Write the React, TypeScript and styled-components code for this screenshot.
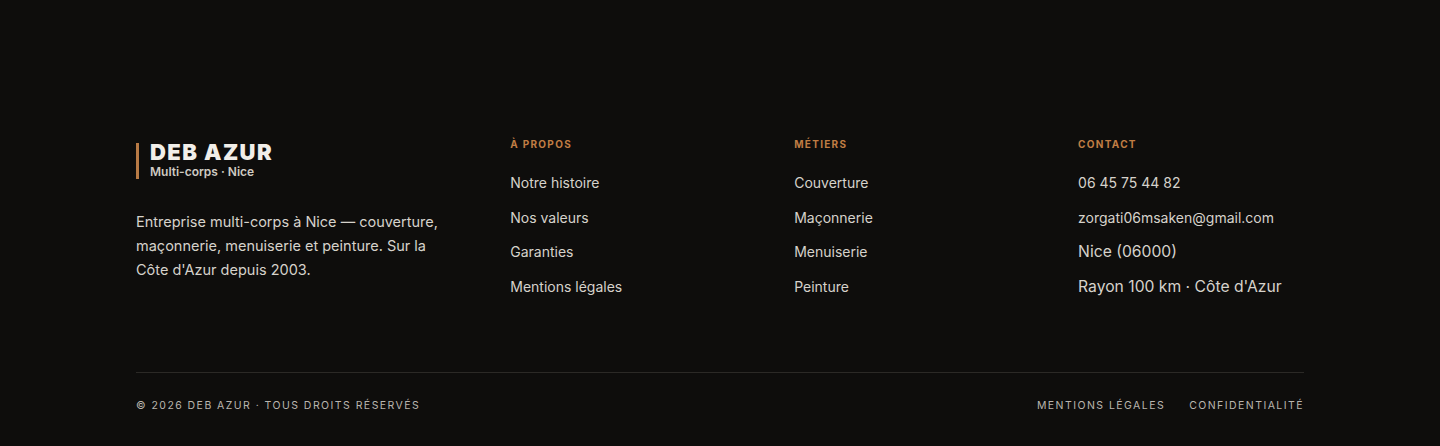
import React from 'react';
import styled, { createGlobalStyle } from 'styled-components';

const GlobalStyle = createGlobalStyle`
  * { box-sizing: border-box; }
  html, body {
    margin: 0;
    padding: 0;
    background: #0e0d0c;
  }
  body {
    font-family: Inter, "Open Sans", "Liberation Sans", sans-serif;
    -webkit-font-smoothing: antialiased;
  }
`;

const Footer = styled.footer`
  background: #0e0d0c;
  color: #d6d2cb;
  padding: 136px 136px 0;
  min-height: 446px;
`;

const Columns = styled.div`
  display: grid;
  grid-template-columns: 1.4fr 1fr 1fr 1fr;
  column-gap: 58px;
  padding-bottom: 60px;
`;

const Brand = styled.div`
  display: flex;
  flex-direction: column;
`;

const Logo = styled.div`
  border-left: 3px solid #b87a45;
  padding-left: 11px;
  margin-top: 7px;
  display: flex;
  flex-direction: column;
`;

const LogoName = styled.span`
  font-size: 22px;
  font-weight: 900;
  line-height: 22px;
  color: #f1eee9;
  letter-spacing: 1.4px;
  margin-top: -2px;
`;

const LogoTag = styled.span`
  font-size: 12px;
  font-weight: 600;
  line-height: 14px;
  color: #cfcac2;
  margin-top: 2px;
`;

const About = styled.p`
  margin: 31px 0 0;
  font-size: 14.5px;
  line-height: 24px;
  color: #d6d2cb;
  max-width: 320px;
`;

const Column = styled.div`
  display: flex;
  flex-direction: column;
`;

const Heading = styled.h4`
  margin: 0 0 20px;
  padding-top: 1px;
  font-size: 10px;
  font-weight: 700;
  letter-spacing: 1.3px;
  text-transform: uppercase;
  color: #c07d44;
  line-height: 14px;
`;

const List = styled.ul`
  list-style: none;
  margin: 0;
  padding: 2px 0 0;
  display: flex;
  flex-direction: column;
`;

const Item = styled.li<{ $large?: boolean }>`
  font-size: ${p => (p.$large ? '15.7px' : '14px')};
  line-height: 20px;
  height: 34.7px;
  color: #d6d2cb;
  white-space: nowrap;
`;

const Bottom = styled.div`
  border-top: 1px solid #2b2926;
  padding-top: 26px;
  display: flex;
  justify-content: space-between;
  align-items: center;
`;

const Small = styled.span`
  font-size: 10.5px;
  letter-spacing: 1.45px;
  text-transform: uppercase;
  color: #b9b5ae;
`;

const BottomLinks = styled.div`
  display: flex;
  gap: 24px;
`;

const aboutLinks = ['Notre histoire', 'Nos valeurs', 'Garanties', 'Mentions légales'];
const trades = ['Couverture', 'Maçonnerie', 'Menuiserie', 'Peinture'];

export default function App() {
  return (
    <>
      <GlobalStyle />
      <Footer>
        <Columns>
          <Brand>
            <Logo>
              <LogoName>DEB AZUR</LogoName>
              <LogoTag>Multi-corps · Nice</LogoTag>
            </Logo>
            <About>
              Entreprise multi-corps à Nice — couverture, maçonnerie, menuiserie et peinture. Sur la
              Côte d'Azur depuis 2003.
            </About>
          </Brand>
          <Column>
            <Heading>À propos</Heading>
            <List>
              {aboutLinks.map(l => (
                <Item key={l}>{l}</Item>
              ))}
            </List>
          </Column>
          <Column>
            <Heading>Métiers</Heading>
            <List>
              {trades.map(l => (
                <Item key={l}>{l}</Item>
              ))}
            </List>
          </Column>
          <Column>
            <Heading>Contact</Heading>
            <List>
              <Item>06 45 75 44 82</Item>
              <Item>zorgati06msaken@gmail.com</Item>
              <Item $large>Nice (06000)</Item>
              <Item $large>Rayon 100 km · Côte d'Azur</Item>
            </List>
          </Column>
        </Columns>
        <Bottom>
          <Small>© 2026 Deb Azur · Tous droits réservés</Small>
          <BottomLinks>
            <Small>Mentions légales</Small>
            <Small>Confidentialité</Small>
          </BottomLinks>
        </Bottom>
      </Footer>
    </>
  );
}
